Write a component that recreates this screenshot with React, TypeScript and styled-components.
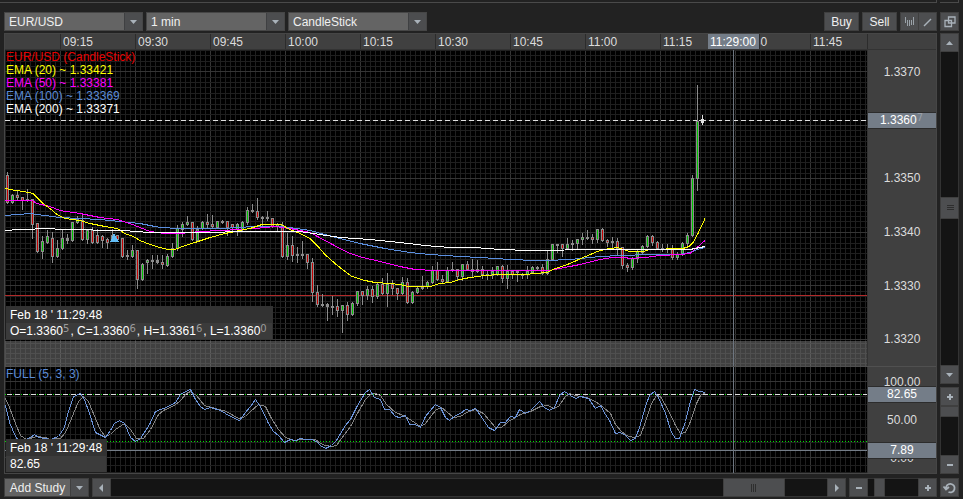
import React from "react";
import styled, { createGlobalStyle } from "styled-components";

const GlobalStyle = createGlobalStyle`
  * { box-sizing: border-box; }
  body {
    margin: 0;
    background: #222;
    color: #e8e8e8;
    font: 12px/16px "Liberation Sans", Arial, sans-serif;
  }
  button, select { font: inherit; color: inherit; margin: 0; padding: 0; border-radius: 0; }
`;

const Page = styled.main`
  display: flex;
  flex-direction: column;
  min-height: 100vh;
  background: #222;
`;

const TopEdge = styled.div`
  display: grid;
  grid-template-columns: 1fr 19px;
  gap: 3px;
  height: 3px;
  padding-right: 4px;
`;

const Edge = styled.div`
  border: solid #4a4a4a;
  border-width: 0 1px 1px 0;
`;

const Toolbar = styled.header`
  display: flex;
  gap: 3px;
  height: 19px;
  margin: 9px 4px 2px;
`;

const Spacer = styled.div`
  flex: 1;
`;

const SelectBox = styled.label`
  display: flex;
  position: relative;
  width: 139px;
`;

const Select = styled.select`
  appearance: none;
  width: 100%;
  padding: 0 20px 0 4px;
  border: 1px solid #464646;
  background: linear-gradient(to right, #646464 calc(100% - 18px), #3f4042 calc(100% - 18px), #3f4042 calc(100% - 17px), #4c4d4f calc(100% - 17px));
  color: #f0f0f0;
`;

const SelectArrow = styled.span`
  position: absolute;
  right: 0;
  top: 0;
  bottom: 0;
  width: 19px;
  display: grid;
  place-items: center;
  pointer-events: none;
`;

const Button = styled.button<{ $width?: number; $light?: boolean }>`
  display: flex;
  align-items: center;
  justify-content: center;
  flex: none;
  width: ${(p) => p.$width ?? 19}px;
  height: 19px;
  border: 1px solid #3f3f3f;
  background: ${(p) => (p.$light ? "#636363" : "#4d4e50")};
  color: #f0f0f0;
`;

const Joined = styled.div`
  display: flex;
  & > button + button { margin-left: -1px; }
`;

const Body = styled.div`
  display: grid;
  flex: 1;
  grid-template-columns: 1fr 19px;
  grid-template-rows: 1fr 19px;
  gap: 4px 3px;
  padding: 0 4px 2px;
`;

const ChartFrame = styled.section`
  display: flex;
  flex-direction: column;
  min-width: 0;
  border: 1px solid #464646;
`;

const TimeHeader = styled.div`
  display: grid;
  grid-template-columns: 1fr 69px;
  height: 16px;
  background: #404040;
  border-bottom: 1px solid #333;
`;

const TimeTrack = styled.div`
  position: relative;
  display: flex;
  padding-left: 55px;
  overflow: hidden;
`;

const TimeTick = styled.span`
  flex: none;
  width: 75px;
  padding-left: 2px;
  border-left: 1px solid #2c2c2c;
  color: #dcdcdc;
`;

const TimeCursor = styled.span`
  position: absolute;
  left: 703px;
  top: 0;
  width: 52px;
  height: 15px;
  padding-left: 2px;
  border-right: 1px solid #2c2c2c;
  background: #747d88;
  color: #fff;
`;

const AxisCorner = styled.div`
  border-left: 1px solid #2c2c2c;
`;

const Pane = styled.div<{ $grow?: boolean }>`
  display: grid;
  grid-template-columns: 1fr 69px;
  flex: ${(p) => (p.$grow ? "1 0 317px" : "0 0 106px")};
  ${(p) => p.$grow && "border-bottom: 1px solid #505050;"}
`;

const Plot = styled.div`
  position: relative;
  min-width: 0;
  overflow: hidden;
  background: #000;
`;

const Canvas = styled.svg`
  position: absolute;
  inset: 0;
  width: 100%;
  height: 100%;
`;

const Axis = styled.div`
  position: relative;
  overflow: hidden;
  border-left: 1px solid #333;
  background: #404040;
`;

const AxisText = styled.text`
  fill: #dcdcdc;
  text-anchor: middle;
`;

const AxisTag = styled.div<{ $top: number }>`
  position: absolute;
  top: ${(p) => p.$top}px;
  left: 0;
  right: 0;
  height: 17px;
  border: solid #2c2c2c;
  border-width: 1px 0;
  line-height: 15px;
  background: #747d88;
  color: #fff;
  text-align: center;
`;

const Fraction = styled.small<{ $dim?: boolean }>`
  padding-right: 1px;
  font: 10px/10px "DejaVu Sans", sans-serif;
  vertical-align: 3px;
  color: ${(p) => (p.$dim ? "#9aa0a8" : "#9a9a9a")};
`;

const Legend = styled.ul`
  position: absolute;
  left: 1px;
  top: 1px;
  margin: 0;
  padding: 0;
  list-style: none;
  line-height: 13px;
`;

const LegendItem = styled.li<{ $color: string }>`
  color: ${(p) => p.$color};
`;

const InfoBox = styled.div<{ $top: number }>`
  position: absolute;
  left: 1px;
  top: ${(p) => p.$top}px;
  padding: 0 1px 0 0;
  background: #323232;
  color: #fff;
`;

const InfoRow = styled.div<{ $value?: boolean }>`
  height: ${(p) => (p.$value ? 16 : 17)}px;
  padding: 0 4px;
  line-height: ${(p) => (p.$value ? 17 : 18)}px;
  white-space: nowrap;
  ${(p) => p.$value && "background: #3b3b3b;"}
`;

const SideColumn = styled.aside`
  display: flex;
  flex-direction: column;
  gap: 3px;
`;

const BottomRow = styled.footer`
  display: flex;
  gap: 3px;
`;

const Bar = styled.div<{ $vertical?: boolean; $size?: number }>`
  display: flex;
  flex-direction: ${(p) => (p.$vertical ? "column" : "row")};
  flex: ${(p) => (p.$size ? `0 0 ${p.$size}px` : "1")};
  background: #141414;
  border: solid #333;
  border-width: ${(p) => (p.$vertical ? "0 1px" : "1px 0")};
  & > button { margin: ${(p) => (p.$vertical ? "0 -1px" : "-1px 0")}; }
`;

const Gap = styled.div<{ $weight: number }>`
  flex: ${(p) => p.$weight} 1 0;
`;

const Thumb = styled.button<{ $w: number; $h: number }>`
  display: grid;
  place-items: center;
  flex: none;
  width: ${(p) => p.$w}px;
  height: ${(p) => p.$h}px;
  border: 1px solid #3f3f3f;
  background: #4d4e50;
`;

type Mark = "up" | "down" | "left" | "right" | "plus" | "minus" | "gripH" | "gripV" | "bars" | "line" | "windows" | "reload";

const MARKS: Record<Mark, React.ReactNode> = {
  up: <path d="M2 8h7L5.5 4z" fill="#a9b2ba" />,
  down: <path d="M2 4h7L5.5 8z" fill="#a9b2ba" />,
  left: <path d="M7 2v8L3 6z" fill="#a9b2ba" />,
  right: <path d="M4 2v8l4-4z" fill="#a9b2ba" />,
  plus: <path d="M5 3h2v2h2v2H7v2H5V7H3V5h2z" fill="#a9b2ba" />,
  minus: <path d="M3 5h6v2H3z" fill="#a9b2ba" />,
  gripH: <path d="M3 3.5h7M3 5.5h7M3 7.5h7" stroke="#2e2e2e" />,
  gripV: <path d="M3.5 2v8M5.5 2v8M7.5 2v8" stroke="#2e2e2e" />,
  bars: <path d="M1.5 1v6M3.5 4v6M5.5 4v6M7.5 4v5M9.5 1v8" stroke="#9aa2a9" />,
  line: <path d="M2 10l7-7" stroke="#a9b2ba" strokeWidth="1.5" />,
  windows: <path d="M4.500 1h6.500v6H4.500zM1 4.500h6.500v6H1z" fill="none" stroke="#a9b2ba" strokeWidth="1.3" />,
  reload: <path d="M2 6.500a4.300 4.300 0 1 1 2.500 3.500M-.5 4.500l2.500 3 3-2.500" fill="none" stroke="#a9b2ba" strokeWidth="1.8" />,
};

const Icon = ({ mark }: { mark: Mark }) => (
  <svg width="12" height="12" viewBox="0 0 12 12" overflow="visible" aria-hidden="true">
    {MARKS[mark]}
  </svg>
);

/* One bar per minute: high, body top, body bottom, low, direction (r, g or n for flat). */
const CANDLES = `172,175,202,203,r 194,195,202,203,g 190,195,197,200,r 197,197,200,209,r 189,199,200,201,n 199,199,224,238,r
223,223,251,252,r 236,241,251,258,g 230,236,242,243,g 232,238,256,262,r 240,248,256,257,g 229,238,248,249,g 234,238,240,243,n
222,222,240,241,g 216,219,222,223,g 215,220,239,240,r 229,230,239,243,g 227,230,242,243,r 229,235,242,243,r 235,236,240,247,r
238,239,242,248,r 229,235,239,240,r 235,235,239,240,r 238,238,256,257,r 250,255,256,259,n 245,250,256,257,g 250,250,279,288,r
263,264,279,280,g 259,260,262,273,g 255,260,261,268,n 255,260,262,263,n 255,262,264,268,r 254,256,265,266,g 243,248,256,257,g
225,228,248,250,g 222,224,229,236,g 216,222,224,225,g 222,222,239,240,r 226,229,240,241,g 221,222,228,229,g 214,222,224,227,r
215,224,226,227,r 221,221,227,228,g 220,221,222,223,n 221,221,227,235,r 224,224,227,230,r 223,224,229,235,g 221,222,229,230,g
207,210,222,224,g 204,210,211,212,n 198,211,217,219,r 216,217,218,226,n 211,217,218,220,n 218,218,226,227,r 223,224,226,230,g
222,225,256,257,r 233,245,256,259,g 236,245,255,261,r 247,254,255,262,n 241,254,255,258,n 254,254,262,268,r 258,262,292,301,r
285,292,304,306,r 294,304,305,306,n 303,304,306,320,n 296,306,307,314,n 299,306,310,316,r 305,305,310,332,g 302,305,314,320,r
302,303,314,315,g 291,291,303,305,g 291,291,295,304,r 286,289,295,299,g 286,289,296,302,r 283,284,296,298,g 278,284,293,294,r
273,284,293,306,g 280,284,288,294,r 288,288,293,299,r 277,282,293,294,g 278,282,302,303,r 291,292,302,303,g 286,288,292,293,g
276,286,288,289,n 281,282,286,288,g 266,270,282,283,g 262,270,279,280,r 275,279,281,282,r 267,270,281,282,g 262,269,270,271,n
269,269,276,280,r 264,264,276,280,g 261,264,269,270,r 259,269,271,276,n 260,269,271,272,n 266,269,274,278,r 271,274,275,279,n
267,271,275,278,g 266,266,274,275,g 265,266,278,282,r 265,271,278,288,g 271,271,274,278,r 271,271,272,281,n 273,274,275,278,n
266,271,274,278,g 266,267,272,273,g 266,267,268,270,n 264,267,273,274,r 251,259,273,274,g 244,244,259,260,g 244,244,245,252,n
244,244,248,256,r 238,244,248,249,g 240,243,244,250,n 239,239,243,249,g 233,237,239,244,g 230,237,238,239,n 234,237,239,243,r
229,229,239,242,g 228,229,240,241,r 239,240,242,246,r 237,241,242,247,n 238,241,248,255,r 247,247,265,268,r 263,265,267,271,r
257,258,267,269,g 250,251,258,262,g 245,246,252,254,g 235,236,246,247,g 235,236,242,245,r 241,242,248,249,r 244,248,249,251,n
244,248,249,252,n 245,249,257,259,r 252,254,257,259,g 242,243,254,255,g 233,235,243,245,g 175,178,235,236,g 85,121,178,190,g`
  .split(/\s+/)
  .map((row) => {
    const [high, top, bottom, low, dir] = row.split(",");
    return { high: +high, top: +top, bottom: +bottom, low: +low, dir };
  });

const AVERAGES = [
  { color: "#5b8fe0", points: "5,215 30,213 45,215 60,217 80,218 100,219 120,221 140,223 160,227 180,228 220,228 240,227 253,226 283,226 310,230 325,234 340,238 360,243 385,248 410,252 430,254 460,256 480,257 510,259 535,260 547,260 570,259 600,256 620,255 650,254 680,254 690,252 700,248 705,247" },
  { color: "#ff00ff", points: "5,200 32,200 37,203 50,206 60,210 80,213 100,217 117,219 130,223 140,227 150,231 165,233 180,233 200,231 240,229 255,228 275,226 290,228 300,230 310,232 325,240 340,248 350,253 363,257 380,261 400,266 415,269 435,270 549,270 565,267 580,264 600,259 612,257 625,257 630,258 645,257 660,255 680,254 690,253 697,247 705,240" },
  { color: "#ffff00", points: "5,188 15,190 24,191 33,193 38,198 43,203 50,208 57,214 65,218 80,220 90,223 105,226 117,228 125,233 133,236 140,240 150,244 160,247 168,249 175,249 185,245 195,242 210,237 225,233 240,230 250,228 262,224 281,224 290,229 300,233 310,238 318,246 325,254 335,263 345,271 352,276 365,280 375,282 390,283 400,284 408,286 430,286 440,283 450,282 460,279 470,277 485,275 500,274 525,274 535,273 547,272 553,269 570,263 583,257 600,250 610,248 618,247 623,249 630,251 643,251 650,249 683,248 689,246 693,242 698,233 705,218" },
  { color: "#ffffff", points: "5,230 20,229 50,228 60,229 125,230 135,231 150,232 210,232 240,231 300,231 320,234 340,237 370,239 400,242 425,245 450,247 475,247 500,249 530,250 600,249 690,249 700,247 705,246" },
];

/* Oscillator samples are kept at three units per pixel. */
const FAST = "15,225 28,278 45,318 55,330 75,327 90,321 103,312 115,322 150,328 175,318 192,292 205,245 220,200 240,190 252,207 268,250 285,308 315,322 330,300 343,280 358,271 372,280 390,322 405,333 420,325 448,284 465,245 480,237 500,232 525,217 540,192 555,185 570,178 585,208 600,230 612,238 630,231 660,240 690,258 718,271 735,247 750,230 765,208 785,235 805,280 820,305 835,316 853,337 870,328 885,332 900,326 915,329 935,328 950,333 960,347 977,355 995,347 1010,330 1035,285 1050,268 1068,233 1082,212 1095,187 1108,179 1122,202 1140,208 1153,238 1168,238 1185,260 1198,263 1215,257 1228,283 1245,284 1260,291 1275,260 1290,240 1305,223 1320,232 1335,262 1348,271 1365,257 1380,249 1395,238 1410,242 1425,236 1440,257 1465,292 1483,301 1500,278 1515,277 1530,259 1545,263 1558,238 1575,250 1592,240 1618,214 1632,232 1648,241 1663,232 1678,197 1693,184 1710,195 1725,206 1742,199 1765,206 1785,235 1800,227 1815,252 1828,270 1845,311 1860,308 1875,316 1892,332 1905,325 1918,292 1935,230 1948,196 1963,184 1975,202 1995,250 2015,308 2025,324 2038,326 2055,275 2070,215 2083,178 2098,183 2115,188";
const SLOW = "15,205 28,232 45,280 60,315 78,327 110,320 135,322 150,328 180,324 197,308 215,265 235,215 250,200 265,215 285,265 300,300 315,318 330,312 345,298 372,281 390,297 410,325 430,324 450,297 475,253 490,240 522,227 540,210 560,190 570,184 590,197 612,225 645,234 680,245 715,265 735,260 750,245 775,222 795,230 815,265 835,297 855,322 880,330 910,328 945,328 960,340 975,345 995,350 1010,345 1025,325 1050,290 1075,245 1095,208 1110,193 1125,189 1140,197 1160,222 1185,247 1210,257 1235,272 1260,288 1275,280 1295,257 1310,238 1325,233 1340,243 1360,261 1380,260 1400,248 1425,238 1450,250 1485,293 1505,292 1525,273 1560,254 1590,245 1620,228 1645,227 1660,235 1675,228 1695,200 1708,189 1725,197 1760,202 1785,213 1810,232 1830,250 1845,282 1865,305 1880,317 1900,323 1920,316 1935,275 1955,220 1970,197 1980,200 2005,240 2025,285 2040,310 2055,308 2070,275 2090,220 2102,195 2115,188";

const toPixels = (samples: string) =>
  samples
    .split(" ")
    .map((pair) => {
      const [x, y] = pair.split(",").map(Number);
      return `${Math.floor(x / 3) - 5},${Math.floor(y / 3) - 37}`;
    })
    .join(" ");

const range = (n: number) => Array.from({ length: n }, (_, i) => i);

const Columns = ({ id, major, minor }: { id: string; major: string; minor: string }) => (
  <>
    <defs>
      <pattern id={id} x="55" width="75" height="10" patternUnits="userSpaceOnUse">
        {range(15).map((i) => (
          <rect key={i} x={i * 5} width="1" height="10" fill={i ? minor : major} />
        ))}
      </pattern>
    </defs>
    <rect width="100%" height="100%" fill={`url(#${id})`} />
  </>
);

const Row = ({ y, color, dash }: { y: number; color: string; dash?: string }) => (
  <line x1="0" x2="100%" y1={y + 0.5} y2={y + 0.5} stroke={color} strokeDasharray={dash} />
);

const PriceCanvas = () => (
  <Canvas shapeRendering="crispEdges">
    <Columns id="price-columns" major="#353535" minor="#1f1f1f" />
    {range(60).map((i) => (
      <Row key={i} y={Math.round(i * 5.35)} color={i % 10 === 4 ? "#353535" : "#1f1f1f"} />
    ))}
    <rect y="291" width="100%" height="100%" fill="#404040" />
    <svg y="291" width="100%" height="100%">
      <Columns id="band-columns" major="#5c5c5c" minor="#4f4f4f" />
      {range(5).map((i) => (
        <Row key={i} y={2 + i * 5} color="#4f4f4f" />
      ))}
    </svg>
    <Row y={245} color="#b22a2a" />
    <Row y={70} color="#e0e0e0" dash="5 3" />
    <g transform="translate(-5 -50)">
      {CANDLES.map((c, i) => {
        const x = 6 + i * 5;
        return (
          <g key={i}>
            <rect x={x + 1} y={c.high} width="1" height={c.low - c.high + 1} fill="#8c8c8c" />
            <rect x={x} y={c.top} width="3" height={c.bottom - c.top + 1} fill="#8c8c8c" />
            {c.dir !== "n" && (
              <rect x={x + 1} y={c.top + 1} width="1" height={Math.max(c.bottom - c.top - 1, 1)} fill={c.dir === "g" ? "#00c400" : "#c40000"} />
            )}
          </g>
        );
      })}
      <path d="M702 115h1v4h1v1h2v1h-2v2h-1v2h-1v-2h-1v-2h-2v-1h2v-1h1z" fill="#e0e0e0" />
      {AVERAGES.map((a) => (
        <polyline key={a.color} points={a.points} fill="none" stroke={a.color} transform="translate(0 .5)" />
      ))}
      <path d="M114 233l5 9h-9z" fill="#62bdf5" />
    </g>
    <rect x="728" width="1" height="100%" fill="#6d757f" />
  </Canvas>
);

const StudyCanvas = () => (
  <Canvas shapeRendering="crispEdges">
    <Columns id="study-columns" major="#353535" minor="#1f1f1f" />
    {range(14).map((i) => (
      <Row key={i} y={Math.round(6.4 + i * 7.6)} color={i === 1 || i === 11 ? "#353535" : "#1f1f1f"} />
    ))}
    <Row y={27} color="#00e000" dash="1 7" />
    <Row y={27} color="#e0e0e0" dash="0 2 5 1" />
    <Row y={74} color="#00e000" dash="1 2" />
    <Row y={83} color="#747d88" />
    <polyline points={toPixels(SLOW)} fill="none" stroke="#828282" transform="translate(.5 .5)" />
    <polyline points={toPixels(FAST)} fill="none" stroke="#6b93d8" transform="translate(.5 .5)" />
    <rect x="728" width="1" height="100%" fill="#6d757f" />
  </Canvas>
);

const TIMES = ["09:15", "09:30", "09:45", "10:00", "10:15", "10:30", "10:45", "11:00", "11:15", "11:30", "11:45"];
const PRICES = [["1.3370", 26], ["1.3350", 132], ["1.3340", 186], ["1.3330", 240], ["1.3320", 293]] as const;
const LEGEND = [
  ["#e80000", "EUR/USD (CandleStick)"],
  ["#ffff00", "EMA (20) ~ 1.33421"],
  ["#ff00ff", "EMA (50) ~ 1.33381"],
  ["#5b8bd6", "EMA (100) ~ 1.33369"],
  ["#ffffff", "EMA (200) ~ 1.33371"],
];

const Picker = ({ label, options }: { label: string; options: string[] }) => (
  <SelectBox>
    <Select aria-label={label}>
      {options.map((o) => (
        <option key={o}>{o}</option>
      ))}
    </Select>
    <SelectArrow>
      <Icon mark="down" />
    </SelectArrow>
  </SelectBox>
);

export default function App() {
  return (
    <>
      <GlobalStyle />
      <Page>
        <TopEdge>
          <Edge />
          <Edge />
        </TopEdge>
        <Toolbar>
          <Picker label="Instrument" options={["EUR/USD"]} />
          <Picker label="Interval" options={["1 min"]} />
          <Picker label="Chart type" options={["CandleStick"]} />
          <Spacer />
          <Button $width={35}>Buy</Button>
          <Button $width={35}>Sell</Button>
          <Joined>
            <Button aria-label="Bars"><Icon mark="bars" /></Button>
            <Button aria-label="Draw line"><Icon mark="line" /></Button>
          </Joined>
          <Button aria-label="Detach window"><Icon mark="windows" /></Button>
        </Toolbar>
        <Body>
          <ChartFrame>
            <TimeHeader>
              <TimeTrack>
                {TIMES.map((t) => (
                  <TimeTick key={t}>{t}</TimeTick>
                ))}
                <TimeCursor>11:29:00</TimeCursor>
              </TimeTrack>
              <AxisCorner />
            </TimeHeader>
            <Pane $grow>
              <Plot>
                <PriceCanvas />
                <Legend>
                  {LEGEND.map(([color, text]) => (
                    <LegendItem key={text} $color={color}>{text}</LegendItem>
                  ))}
                </Legend>
                <InfoBox $top={256}>
                  <InfoRow>Feb 18 ' 11:29:48</InfoRow>
                  <InfoRow $value>
                    O=1.3360<Fraction>5</Fraction>, C=1.3360<Fraction>6</Fraction>, H=1.3361<Fraction>6</Fraction>, L=1.3360<Fraction>0</Fraction>
                  </InfoRow>
                </InfoBox>
              </Plot>
              <Axis>
                <Canvas>
                  {PRICES.map(([text, y]) => (
                    <AxisText key={text} x="34" y={y}>{text}</AxisText>
                  ))}
                </Canvas>
                <AxisTag $top={62}>
                  1.3360<Fraction $dim>7</Fraction>
                </AxisTag>
              </Axis>
            </Pane>
            <Pane>
              <Plot>
                <StudyCanvas />
                <Legend>
                  <LegendItem $color="#5b8bd6">FULL (5, 3, 3)</LegendItem>
                </Legend>
                <InfoBox $top={72}>
                  <InfoRow>Feb 18 ' 11:29:48</InfoRow>
                  <InfoRow $value>82.65</InfoRow>
                </InfoBox>
              </Plot>
              <Axis>
                <Canvas>
                  <AxisText x="34" y="19">100.00</AxisText>
                  <AxisText x="34" y="57">50.00</AxisText>
                  <AxisText x="34" y="95">0.00</AxisText>
                </Canvas>
                <AxisTag $top={19}>82.65</AxisTag>
                <AxisTag $top={75}>7.89</AxisTag>
              </Axis>
            </Pane>
          </ChartFrame>
          <SideColumn>
            <Bar $vertical>
              <Button aria-label="Scroll up"><Icon mark="up" /></Button>
              <Gap $weight={145} />
              <Thumb $w={19} $h={22} aria-label="Scroll price"><Icon mark="gripH" /></Thumb>
              <Gap $weight={147} />
              <Button aria-label="Scroll down"><Icon mark="down" /></Button>
            </Bar>
            <Bar $vertical $size={87}>
              <Button aria-label="Zoom price in"><Icon mark="plus" /></Button>
              <Thumb $w={19} $h={11} aria-label="Price zoom level" />
              <Gap $weight={1} />
              <Button aria-label="Zoom price out"><Icon mark="minus" /></Button>
            </Bar>
          </SideColumn>
          <BottomRow>
            <Joined>
              <Button $width={67} $light>Add Study</Button>
              <Button aria-label="Study list"><Icon mark="down" /></Button>
            </Joined>
            <Bar>
              <Button aria-label="Scroll left"><Icon mark="left" /></Button>
              <Gap $weight={612} />
              <Thumb $w={62} $h={19} aria-label="Scroll time"><Icon mark="gripV" /></Thumb>
              <Gap $weight={42} />
              <Button aria-label="Scroll right"><Icon mark="right" /></Button>
            </Bar>
            <Bar $size={88}>
              <Button aria-label="Zoom time out"><Icon mark="minus" /></Button>
              <Gap $weight={6} />
              <Thumb $w={11} $h={19} aria-label="Time zoom level" />
              <Gap $weight={34} />
              <Button aria-label="Zoom time in"><Icon mark="plus" /></Button>
            </Bar>
          </BottomRow>
          <Button aria-label="Reset view"><Icon mark="reload" /></Button>
        </Body>
      </Page>
    </>
  );
}
